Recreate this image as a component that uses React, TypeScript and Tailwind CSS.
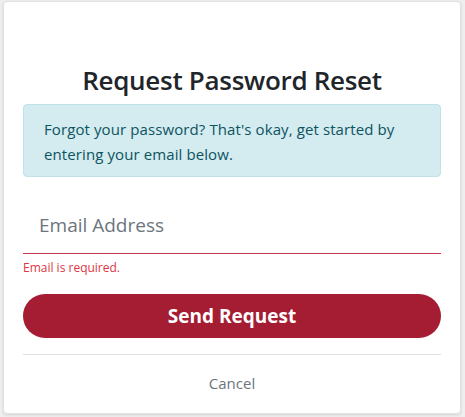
import React, { useState } from 'react';

const App: React.FC = () => {
  const [email, setEmail] = useState('');

  return (
    <div className="w-[465px] h-[417px] bg-[#efefef] pl-[3px] pr-[4px] pt-[1px] pb-[3px] font-['Open_Sans',sans-serif]">
      <div className="h-full bg-white rounded-[4px] border border-[#e2e2e2] shadow-[0_1px_3px_rgba(0,0,0,0.12)] px-[19px] flex flex-col">
        <h1 className="mt-[60px] text-center text-[26px] leading-[36px] font-semibold text-[#212529] tracking-[-0.3px]">
          Request Password Reset
        </h1>
        <div className="mt-[6px] h-[73px] bg-[#d4ebf0] border border-[#bfe2e9] rounded-[4px] px-[20px] pt-[12px] text-[15px] leading-[25px] text-[#0c5460] tracking-[0.1px]">
          Forgot your password? That's okay, get started by entering your email below.
        </div>
        <div className="mt-[24px]">
          <input
            type="email"
            value={email}
            onChange={(e) => setEmail(e.target.value)}
            placeholder="Email Address"
            className="w-full h-[53px] pl-[16px] pb-[4px] text-[19px] text-[#495057] placeholder:text-[#6c757d] border-b border-[#c8374b] outline-none bg-white"
          />
          <div className="mt-[6px] text-[12px] leading-[16px] text-[#dc3545]">Email is required.</div>
        </div>
        <button className="mt-[18px] h-[44px] w-full rounded-full bg-[#a51d32] text-white text-[19px] font-bold">
          Send Request
        </button>
        <div className="mt-[16px] border-t border-[#dee2e6]" />
        <button className="mt-[17px] text-[15px] text-[#6c757d] self-center">Cancel</button>
      </div>
    </div>
  );
};

export default App;
